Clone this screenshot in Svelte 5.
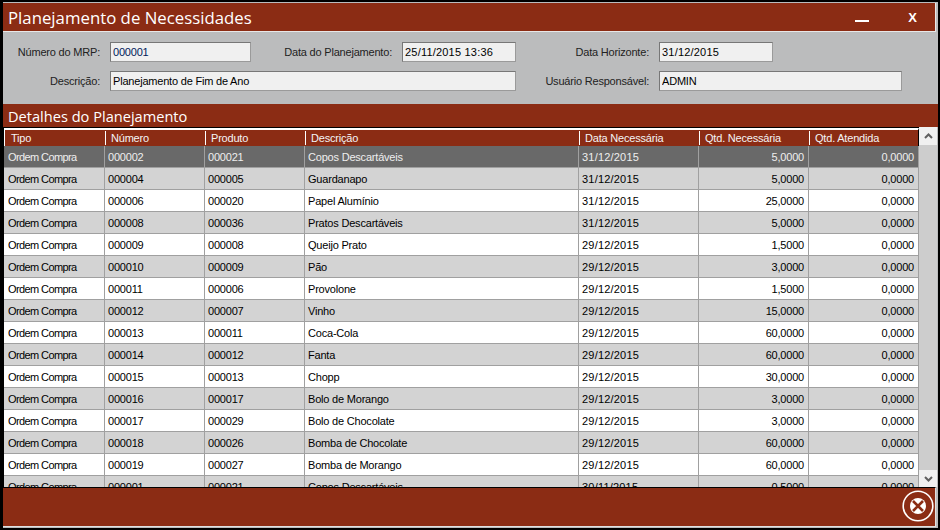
<script lang="ts">
  interface Row {
    tipo: string;
    numero: string;
    produto: string;
    descricao: string;
    data: string;
    necessaria: string;
    atendida: string;
  }

  const rows: Row[] = [
    ['000002', '000021', 'Copos Descartáveis', '31/12/2015', '5,0000'],
    ['000004', '000005', 'Guardanapo', '31/12/2015', '5,0000'],
    ['000006', '000020', 'Papel Alumínio', '31/12/2015', '25,0000'],
    ['000008', '000036', 'Pratos Descartáveis', '31/12/2015', '5,0000'],
    ['000009', '000008', 'Queijo Prato', '29/12/2015', '1,5000'],
    ['000010', '000009', 'Pão', '29/12/2015', '3,0000'],
    ['000011', '000006', 'Provolone', '29/12/2015', '1,5000'],
    ['000012', '000007', 'Vinho', '29/12/2015', '15,0000'],
    ['000013', '000011', 'Coca-Cola', '29/12/2015', '60,0000'],
    ['000014', '000012', 'Fanta', '29/12/2015', '60,0000'],
    ['000015', '000013', 'Chopp', '29/12/2015', '30,0000'],
    ['000016', '000017', 'Bolo de Morango', '29/12/2015', '3,0000'],
    ['000017', '000029', 'Bolo de Chocolate', '29/12/2015', '3,0000'],
    ['000018', '000026', 'Bomba de Chocolate', '29/12/2015', '60,0000'],
    ['000019', '000027', 'Bomba de Morango', '29/12/2015', '60,0000'],
    ['000001', '000021', 'Copos Descartáveis', '30/11/2015', '0,5000'],
  ].map(([numero, produto, descricao, data, necessaria]) => ({
    tipo: 'Ordem Compra',
    numero,
    produto,
    descricao,
    data,
    necessaria,
    atendida: '0,0000',
  }));

  const headers = ['Tipo', 'Número', 'Produto', 'Descrição', 'Data Necessária', 'Qtd. Necessária', 'Qtd. Atendida'];
</script>

<div class="window">
  <div class="panel">
    <header class="titlebar">
      <h1>Planejamento de Necessidades</h1>
      <div class="win-buttons">
        <span class="minimize"></span>
        <span class="close">X</span>
      </div>
    </header>

    <section class="form">
      <span class="label">Número do MRP:</span>
      <input class="field code" readonly value="000001" />
      <span class="label">Data do Planejamento:</span>
      <input class="field date" readonly value="25/11/2015 13:36" />
      <span class="label">Data Horizonte:</span>
      <input class="field date" readonly value="31/12/2015" />
      <span></span>

      <span class="label">Descrição:</span>
      <input class="field span3" readonly value="Planejamento de Fim de Ano" />
      <span class="label">Usuário Responsável:</span>
      <input class="field span2" readonly value="ADMIN" />
    </section>

    <h2 class="section-title">Detalhes do Planejamento</h2>

    <div class="grid-wrap">
      <div class="grid">
        <div class="row head">
          {#each headers as h}
            <div class="cell">{h}</div>
          {/each}
        </div>
        {#each rows as r, i}
          <div class="row" class:selected={i === 0} class:alt={i % 2 === 1}>
            <div class="cell tipo">{r.tipo}</div>
            <div class="cell">{r.numero}</div>
            <div class="cell">{r.produto}</div>
            <div class="cell">{r.descricao}</div>
            <div class="cell date">{r.data}</div>
            <div class="cell num">{r.necessaria}</div>
            <div class="cell num">{r.atendida}</div>
          </div>
        {/each}
      </div>
      <div class="scrollbar">
        <div class="arrow up">
          <svg width="9" height="6" viewBox="0 0 9 6"><path d="M1 5L4.5 1.5L8 5" fill="none" stroke="#606060" stroke-width="2" /></svg>
        </div>
        <div class="track"></div>
        <div class="arrow">
          <svg width="9" height="6" viewBox="0 0 9 6"><path d="M1 1L4.5 4.5L8 1" fill="none" stroke="#606060" stroke-width="2" /></svg>
        </div>
      </div>
    </div>

    <footer class="footer">
      <button class="exit" aria-label="Fechar">
        <svg width="32" height="32" viewBox="0 0 32 32">
          <circle cx="16" cy="16" r="14.8" fill="none" stroke="#fff" stroke-width="1.6" />
          <circle cx="16" cy="16" r="8" fill="#fff" />
          <path d="M11 11L21 21M21 11L11 21" stroke="#8b2c14" stroke-width="2.6" />
        </svg>
      </button>
    </footer>
  </div>
</div>

<style>
  :global(body) {
    margin: 0;
    background: #000;
  }

  .window {
    width: 940px;
    height: 530px;
    box-sizing: border-box;
    padding: 2px 2px 2px 3px;
    background: #000;
    font-family: "Liberation Sans", Arial, sans-serif;
    font-size: 11px;
    letter-spacing: -0.2px;
    overflow: hidden;
  }

  .panel {
    height: 100%;
    display: flex;
    flex-direction: column;
    background: #bbbcbd;
  }

  .titlebar {
    height: 29px;
    flex: none;
    box-sizing: border-box;
    margin: 1px 2px 0 0;
    display: flex;
    align-items: center;
    justify-content: space-between;
    background: #8b2c14;
    border-bottom: 1px solid #e8e8e8;
    border-right: 1px solid #e8e8e8;
    color: #fff;
  }

  h1 {
    margin: 0 0 0 5px;
    font-family: "Open Sans", sans-serif;
    font-size: 16.8px;
    font-weight: 400;
    letter-spacing: 0;
  }

  .win-buttons {
    display: flex;
    align-items: center;
    gap: 39px;
    margin-right: 18px;
  }

  .minimize {
    width: 14px;
    height: 2px;
    margin-top: 8px;
    background: #fff;
  }

  .close {
    font-weight: 700;
    font-size: 13px;
    letter-spacing: 0;
    margin-top: 1px;
  }

  .form {
    flex: none;
    height: 72px;
    box-sizing: border-box;
    padding-top: 10px;
    display: grid;
    grid-template-columns: 107px 141px 151px 114px 143px 114px 129px;
    grid-auto-rows: 20px;
    row-gap: 9px;
    align-items: center;
  }

  .label {
    text-align: right;
    padding-right: 10px;
    color: #222;
  }

  .field {
    box-sizing: border-box;
    width: 100%;
    height: 20px;
    margin: 0;
    padding: 0 0 0 2px;
    background: #f0f0f0;
    border: 1px solid;
    border-color: #777 #9a9a9a #9a9a9a #777;
    font: inherit;
    letter-spacing: inherit;
    color: #000;
    outline: none;
  }

  .field.date,
  .cell.date {
    letter-spacing: 0.2px;
  }

  .code {
    color: #00205a;
  }

  .span3 {
    grid-column: span 3;
  }

  .span2 {
    grid-column: span 2;
  }

  .section-title {
    flex: none;
    margin: 0;
    height: 23px;
    line-height: 24px;
    padding-left: 5px;
    background: #8b2c14;
    color: #fff;
    font-family: "Open Sans", sans-serif;
    font-size: 14.6px;
    font-weight: 400;
    letter-spacing: 0;
  }

  .grid-wrap {
    flex: 1;
    min-height: 0;
    margin-right: 1px;
    display: flex;
    background: #f0f0f0;
    overflow: hidden;
  }

  .grid {
    flex: none;
    width: 916px;
    box-sizing: border-box;
    overflow: hidden;
    background: #f0f0f0;
    border-left: 1px solid #000;
    border-top: 1px solid #000;
  }

  .row {
    display: grid;
    grid-template-columns: 101px 100px 100px 274px 120px 110px 110px;
    height: 22px;
    box-sizing: border-box;
    background: #fff;
    color: #000;
    border-bottom: 1px solid #a0a0a0;
  }

  .row.alt {
    background: #d3d3d3;
  }

  .row.selected {
    background: #696969;
    color: #eee;
  }

  .cell {
    display: flex;
    align-items: center;
    padding-left: 3px;
    border-right: 1px solid #a0a0a0;
    white-space: nowrap;
    overflow: hidden;
  }

  .cell:first-child {
    padding-left: 4px;
  }

  .cell.tipo {
    letter-spacing: -0.6px;
  }

  .cell.num {
    justify-content: flex-end;
    padding: 0 4px 0 0;
  }

  .row.head {
    height: 18px;
    background: #8b2c14;
    color: #f4f4f4;
    border-bottom: 0;
    border-top: 2px solid #fff;
    border-right: 1px solid #000;
  }

  .head .cell {
    border-right: 0;
    border-left: 1px solid #fff;
    padding-left: 5px;
    margin: 1px 0;
  }

  .head .cell:first-child {
    padding-left: 6px;
    margin: 0;
  }

  .scrollbar {
    flex: 1;
    display: flex;
    flex-direction: column;
    background: #f0f0f0;
  }

  .arrow {
    height: 17px;
    flex: none;
    display: flex;
    align-items: center;
    justify-content: center;
  }

  .arrow.up {
    height: 18px;
  }

  .track {
    flex: 1;
    background: #cdcdcd;
  }

  .footer {
    flex: none;
    height: 40px;
    margin: 0 2px 1px 0;
    box-sizing: border-box;
    border-top: 1px solid #000;
    border-bottom: 1px solid #e0e0e0;
    border-right: 1px solid #e0e0e0;
    background: #8b2c14;
    display: flex;
    align-items: center;
    justify-content: flex-end;
    padding: 0 1px 2px 0;
  }

  .exit {
    width: 32px;
    height: 32px;
    padding: 0;
    border: 0;
    background: none;
    display: block;
  }
</style>
